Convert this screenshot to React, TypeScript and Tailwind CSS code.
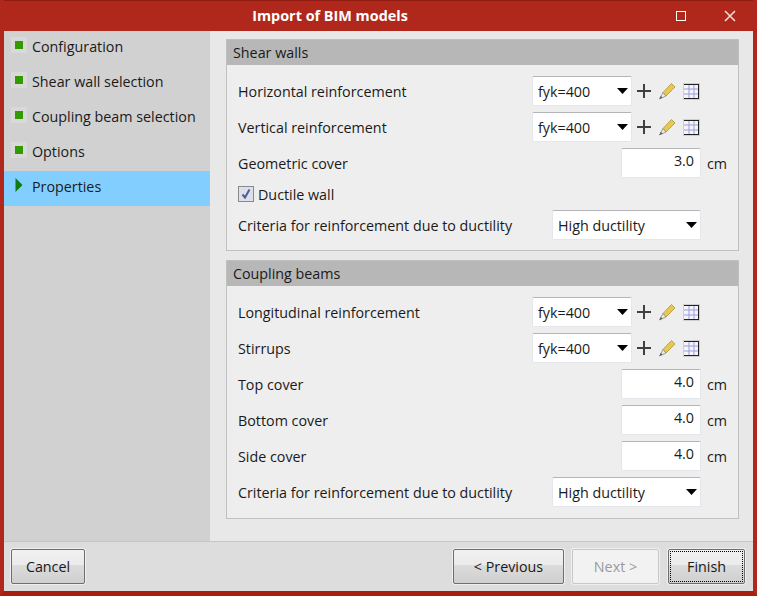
import React from "react";

const FONT = "font-['Open_Sans','Noto_Sans',sans-serif]";

function StepIcon({ active }: { active?: boolean }) {
  if (active) {
    return (
      <svg width="16" height="16" viewBox="0 0 16 16" className="shrink-0">
        <polygon points="4.5,1 11.5,8 4.5,15" fill="#0f7a0f" />
      </svg>
    );
  }
  return (
    <span className="flex h-4 w-4 shrink-0 items-center justify-center bg-[#d9d9d9]">
      <span className="h-2 w-2 bg-[#339900]" />
    </span>
  );
}

function Step({ label, active }: { label: string; active?: boolean }) {
  return (
    <div className={`flex h-[35px] gap-[5px] pl-[7px] pt-[6px] ${active ? "bg-[#82cfff]" : ""}`}>
      <StepIcon active={active} />
      <span className="text-[#1a1a1a]">{label}</span>
    </div>
  );
}

function Select({ value, width }: { value: string; width: string }) {
  return (
    <div className={`flex h-[30px] items-center justify-between rounded-[2px] border border-[#e3e6ea] border-t-[#b4b4b8] bg-white pl-[5px] pr-[3px] ${width}`}>
      <span className="pt-[1px] text-[#1a1a1a]">{value}</span>
      <svg width="11" height="6" viewBox="0 0 11 6">
        <polygon points="0,0 11,0 5.5,6" fill="#000" />
      </svg>
    </div>
  );
}

function RebarTools() {
  return (
    <div className="ml-[4px] flex items-center">
      <svg width="16" height="16" viewBox="0 0 16 16">
        <path d="M8 1v14M1 8h14" stroke="#404040" strokeWidth="2" fill="none" />
      </svg>
      <svg width="17" height="18" viewBox="0 0 17 18" className="ml-[7px]">
        <path d="M4 10.5 L12.5 1.5 L16 5 L7 14 Z" fill="#e8c94e" stroke="#a8963c" strokeWidth="0.8" />
        <path d="M4 10.5 L7 14 L0.5 17 Z" fill="#ece8dc" stroke="#8a8a8a" strokeWidth="0.8" />
        <path d="M0.5 17 L1.8 14 L3.5 15.6 Z" fill="#555" />
      </svg>
      <div className="ml-[7px] h-[17px] w-[17px] bg-[#cfcfcf] p-[1px]">
        <svg width="15" height="15" viewBox="0 0 15 15" className="block">
          <rect width="15" height="15" fill="#f4f4fb" />
          <path d="M5 0v15M10 0v15M0 5h15M0 10h15" stroke="#9d9ddc" strokeWidth="1" fill="none" />
          <path d="M0 .5h15M14.5 0v15M0 14.5h15" stroke="#222" strokeWidth="1" fill="none" />
        </svg>
      </div>
    </div>
  );
}

function RebarRow({ label }: { label: string }) {
  return (
    <div className="flex h-[36px] items-center">
      <span className="w-[294px] shrink-0 pt-[1px] text-[#1a1a1a]">{label}</span>
      <Select value="fyk=400" width="w-[100px]" />
      <RebarTools />
    </div>
  );
}

function CoverRow({ label, value }: { label: string; value: string }) {
  return (
    <div className="flex h-[36px] items-center justify-between">
      <span className="pt-[1px] text-[#1a1a1a]">{label}</span>
      <div className="flex items-center">
        <div className="flex h-[30px] w-[80px] items-start justify-end rounded-[2px] border border-[#e3e6ea] border-t-[#b4b4b8] bg-white pr-[6px] pt-[2px] text-[#1a1a1a]">
          {value}
        </div>
        <span className="w-[26px] pl-[6px] pt-[1px] text-[#1a1a1a]">cm</span>
      </div>
    </div>
  );
}

function CriteriaRow() {
  return (
    <div className="mt-[1px] flex h-[34px] items-center justify-between pr-[26px]">
      <span className="pt-[1px] text-[#1a1a1a]">Criteria for reinforcement due to ductility</span>
      <Select value="High ductility" width="w-[149px]" />
    </div>
  );
}

function Group({ title, children, className }: { title: string; children: React.ReactNode; className?: string }) {
  return (
    <section className={`border border-[#c0c0c0] bg-[#eeeeee] ${className ?? ""}`}>
      <div className="flex h-[25px] items-center bg-[#b7b7b7] pl-[6px] text-[#1a1a1a]">{title}</div>
      {children}
    </section>
  );
}

function Button({ label, width, disabled, focused }: { label: string; width: string; disabled?: boolean; focused?: boolean }) {
  const look = disabled
    ? "border-[#c8c8c8] bg-[#f2f2f2] text-[#9a9a9a]"
    : "border-[#6e6e6e] bg-[linear-gradient(#f1f1f1_0%,#ebebeb_45%,#dcdcdc_46%,#cfcfcf_100%)] text-[#1a1a1a]";
  return (
    <button className={`relative h-[35px] rounded-[2px] border shadow-[0_0_0_1px_#efefef] ${look} ${width}`}>
      {focused && <span className="absolute inset-[1px] border border-dotted border-black" />}
      {label}
    </button>
  );
}

export default function App() {
  return (
    <div className={`flex h-[596px] w-[757px] flex-col overflow-hidden border-x-4 border-b-[5px] border-x-[#b0281c] border-b-[#a81f12] bg-[#b0281c] text-[14.3px] leading-[20px] ${FONT}`}>
      <header className="flex h-[31px] shrink-0 items-center border-t border-t-[#8f1a10]">
        <div className="flex-1 text-center text-[14.4px] font-bold text-white">Import of BIM models</div>
        <div className="flex w-[97px] items-center">
          <div className="flex w-[50px] justify-center">
            <span className="h-[10px] w-[10px] border border-white" />
          </div>
          <div className="flex w-[47px] justify-center">
            <svg width="12" height="12" viewBox="0 0 12 12">
              <path d="M1 1l10 10M11 1L1 11" stroke="#f3dcd9" strokeWidth="1.6" fill="none" />
            </svg>
          </div>
        </div>
      </header>

      <div className="flex min-h-0 flex-1">
        <aside className="w-[206px] shrink-0 bg-[#d1d1d1]">
          <Step label="Configuration" />
          <Step label="Shear wall selection" />
          <Step label="Coupling beam selection" />
          <Step label="Options" />
          <Step label="Properties" active />
        </aside>
        <main className="min-w-0 flex-1 bg-[#e8e8e8] pl-[16px] pr-[14px] pt-[8px]">
          <Group title="Shear walls" className="h-[212px]">
            <div className="pl-[11px] pr-[11px] pt-[8px]">
              <RebarRow label="Horizontal reinforcement" />
              <RebarRow label="Vertical reinforcement" />
              <CoverRow label="Geometric cover" value="3.0" />
              <div className="flex h-[26px] items-center gap-[4px]">
                <span className="flex h-[16px] w-[16px] items-center justify-center border border-[#8a8a8a] bg-[#dde0e8]">
                  <svg width="12" height="12" viewBox="0 0 12 12">
                    <path d="M2.5 6.5l2.5 3L9.5 1.5" stroke="#4a5a9a" strokeWidth="2" fill="none" />
                  </svg>
                </span>
                <span className="pt-[1px] text-[#1a1a1a]">Ductile wall</span>
              </div>
              <CriteriaRow />
            </div>
          </Group>
          <Group title="Coupling beams" className="mt-[9px] h-[259px]">
            <div className="pl-[11px] pr-[11px] pt-[8px]">
              <RebarRow label="Longitudinal reinforcement" />
              <RebarRow label="Stirrups" />
              <CoverRow label="Top cover" value="4.0" />
              <CoverRow label="Bottom cover" value="4.0" />
              <CoverRow label="Side cover" value="4.0" />
              <CriteriaRow />
            </div>
          </Group>
        </main>
      </div>

      <footer className="flex h-[50px] shrink-0 items-center justify-between border-t border-t-[#c6c6c6] bg-[#dddddd] pl-[7px] pr-[8px]">
        <Button label="Cancel" width="w-[74px]" />
        <div className="flex items-center">
          <Button label="< Previous" width="w-[111px]" />
          <Button label="Next >" width="ml-[8px] w-[87px]" disabled />
          <Button label="Finish" width="ml-[9px] w-[77px]" focused />
        </div>
      </footer>
    </div>
  );
}
